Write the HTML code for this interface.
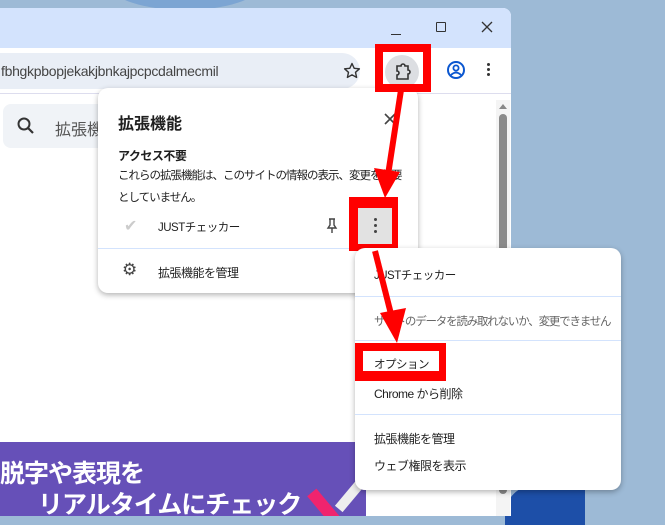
<!DOCTYPE html>
<html><head><meta charset="utf-8"><style>
*{margin:0;padding:0;box-sizing:border-box}
body{width:665px;height:516px;overflow:hidden;position:relative;background:#9dbad6;font-family:"Liberation Sans","Noto Sans CJK JP",sans-serif;color:#1f1f1f}
.abs{position:absolute}
.t{font-size:12px;white-space:nowrap;letter-spacing:-0.5px}
</style></head><body>
<div class="abs" style="left:110px;top:-40px;width:150px;height:50px;border-radius:50%;background:#5c8fd0;opacity:.5"></div>
<div class="abs" style="left:505px;top:485px;width:80px;height:40px;background:#1d4fa8;border-radius:30px 0 0 0"></div>
<!-- window -->
<div class="abs" style="left:0;top:8px;width:511px;height:508px;background:#fff;border-radius:0 8px 0 0;overflow:hidden">
 <div class="abs" style="left:0;top:0;width:511px;height:40px;background:#d3e3fd"></div>
 <div class="abs" style="left:391px;top:26px;width:10px;height:1px;background:#333"></div>
 <div class="abs" style="left:436px;top:14px;width:10px;height:10px;border:1.3px solid #333;border-radius:1px"></div>
 <svg class="abs" style="left:481px;top:13px" width="12" height="12"><path d="M1 1L11 11M11 1L1 11" stroke="#333" stroke-width="1.3"/></svg>
 <div class="abs" style="left:-20px;top:45px;width:380px;height:36px;background:#e9eef6;border-radius:18px"></div>
 <div class="abs t" style="left:1px;top:55px;font-size:14px;color:#444;letter-spacing:-0.3px">fbhgkpbopjekakjbnkajpcpcdalmecmil</div>
 <svg class="abs" style="left:343px;top:54px" width="18" height="18"><path d="M9 1.5l2.2 4.8 5.2.5-3.9 3.5 1.1 5.1L9 12.8 4.4 15.4l1.1-5.1L1.6 6.8l5.2-.5z" fill="none" stroke="#333" stroke-width="1.4" stroke-linejoin="round"/></svg>
 <div class="abs" style="left:385px;top:47px;width:34px;height:34px;border-radius:50%;background:#dcdee2"></div>
 <svg class="abs" style="left:392px;top:54px" width="20" height="20"><path d="M5 4h4a2 2 0 0 1 4 0h3v4a2 2 0 0 1 0 4v5H5v-4a2 2 0 0 0 0-4z" fill="none" stroke="#333" stroke-width="1.6"/></svg>
 <svg class="abs" style="left:446px;top:52px" width="20" height="20"><circle cx="10" cy="10" r="8" fill="none" stroke="#0b57d0" stroke-width="2"/><circle cx="10" cy="8" r="2.6" fill="none" stroke="#0b57d0" stroke-width="1.8"/><path d="M5 15q5-5 10 0" fill="none" stroke="#0b57d0" stroke-width="1.8"/></svg>
 <div class="abs" style="left:487px;top:55px;width:3px;height:3px;background:#333;border-radius:50%;box-shadow:0 5px #333,0 10px #333"></div>
 <div class="abs" style="left:0;top:85px;width:511px;height:1px;background:#dde"></div>
 <div class="abs" style="left:3px;top:96px;width:110px;height:44px;background:#f0f3f7;border-radius:8px"></div>
 <svg class="abs" style="left:16px;top:108px" width="20" height="20"><circle cx="8" cy="8" r="5.5" fill="none" stroke="#333" stroke-width="2"/><path d="M12 12l5 5" stroke="#333" stroke-width="2.2"/></svg>
 <div class="abs" style="left:55px;top:108px;font-size:16px;color:#555">拡張機</div>
 <div class="abs" style="left:496px;top:92px;width:14px;height:420px;background:#f4f4f4"></div>
 <div class="abs" style="left:499px;top:96px;width:0;height:0;border:4px solid transparent;border-bottom:5px solid #888;border-top:0"></div>
 <div class="abs" style="left:499px;top:106px;width:8px;height:380px;background:#8a8a8a;border-radius:4px"></div>
 <div class="abs" style="left:0;top:434px;width:366px;height:80px;background:#6650b8"></div>
 <div class="abs" style="left:0;top:446px;font-size:25px;color:#fff;font-weight:bold;white-space:nowrap;letter-spacing:-1px">脱字や表現を</div>
 <div class="abs" style="left:38px;top:477px;font-size:25px;color:#fff;font-weight:bold;white-space:nowrap;letter-spacing:-1px">リアルタイムにチェック</div>
 <div class="abs" style="left:318px;top:480px;width:12px;height:38px;background:#f0246e;transform:rotate(-40deg)"></div>
 <div class="abs" style="left:345px;top:470px;width:10px;height:35px;background:#eee;transform:rotate(40deg)"></div>
</div>
<!-- popup -->
<div class="abs" style="left:98px;top:88px;width:320px;height:205px;background:#fff;border-radius:10px;box-shadow:0 2px 6px rgba(0,0,0,.3)">
 <div class="abs" style="left:20px;top:22px;font-size:16px;font-weight:bold">拡張機能</div>
 <svg class="abs" style="left:286px;top:25px" width="12" height="12"><path d="M1 1L11 11M11 1L1 11" stroke="#444" stroke-width="1.6"/></svg>
 <div class="abs t" style="left:20px;top:59px;font-weight:bold">アクセス不要</div>
 <div class="abs t" style="left:20px;top:79px;font-size:11.5px;letter-spacing:-1px">これらの拡張機能は、このサイトの情報の表示、変更を必要</div>
 <div class="abs t" style="left:20px;top:101px;font-size:11.5px;letter-spacing:-1px">としていません。</div>
 <div class="abs" style="left:26px;top:128px;color:#ccc;font-size:16px">✔</div>
 <div class="abs t" style="left:60px;top:131px;font-size:11.5px">JUSTチェッカー</div>
 <svg class="abs" style="left:227px;top:130px" width="14" height="16"><path d="M4 1h6M5 1v6l-2 3h8l-2-3V1M7 10v5" fill="none" stroke="#444" stroke-width="1.4"/></svg>
 <div class="abs" style="left:0;top:160px;width:320px;height:1px;background:#d3e3fd"></div>
 <div class="abs" style="left:24px;top:172px;font-size:17px;color:#444">⚙</div>
 <div class="abs t" style="left:60px;top:176px">拡張機能を管理</div>
</div>
<div class="abs" style="left:349px;top:197px;width:49px;height:54px;background:#f00"></div>
<div class="abs" style="left:358px;top:208px;width:34px;height:36px;background:#e2e2e2"></div>
<div class="abs" style="left:374px;top:218px;width:3px;height:3px;background:#444;border-radius:50%;box-shadow:0 6px #444,0 12px #444"></div>
<div class="abs" style="left:375px;top:44px;width:56px;height:48px;border:8px solid #f00"></div>
<!-- context menu -->
<div class="abs" style="left:355px;top:248px;width:266px;height:242px;background:#fff;border-radius:10px;box-shadow:0 2px 6px rgba(0,0,0,.3)">
 <div class="abs t" style="left:19px;top:19px;font-size:11.5px">JUSTチェッカー</div>
 <div class="abs" style="left:0;top:48px;width:266px;height:1px;background:#d3e3fd"></div>
 <div class="abs t" style="left:19px;top:65px;font-size:11.5px;color:#666;letter-spacing:-1.2px">サイトのデータを読み取れないか、変更できません</div>
 <div class="abs" style="left:0;top:92px;width:266px;height:1px;background:#d3e3fd"></div>
 <div class="abs" style="left:0;top:95px;width:91px;height:38px;background:#f00"></div>
 <div class="abs" style="left:8px;top:103px;width:76px;height:20px;background:#fff"></div>
 <div class="abs t" style="left:19px;top:108px;font-size:11.5px">オプション</div>
 <div class="abs t" style="left:19px;top:137px;font-size:12px">Chrome から削除</div>
 <div class="abs" style="left:0;top:166px;width:266px;height:1px;background:#d3e3fd"></div>
 <div class="abs t" style="left:19px;top:182px">拡張機能を管理</div>
 <div class="abs t" style="left:19px;top:209px">ウェブ権限を表示</div>
</div>
<!-- arrows -->
<svg class="abs" style="left:0;top:0" width="665" height="516">
 <path d="M401 90L388 175" stroke="#f00" stroke-width="6"/>
 <path d="M374 168L400 172L385 198Z" fill="#f00"/>
 <path d="M375 251L392 318" stroke="#f00" stroke-width="6"/>
 <path d="M380 313L406 308L397 343Z" fill="#f00"/>
</svg>
</body></html>
